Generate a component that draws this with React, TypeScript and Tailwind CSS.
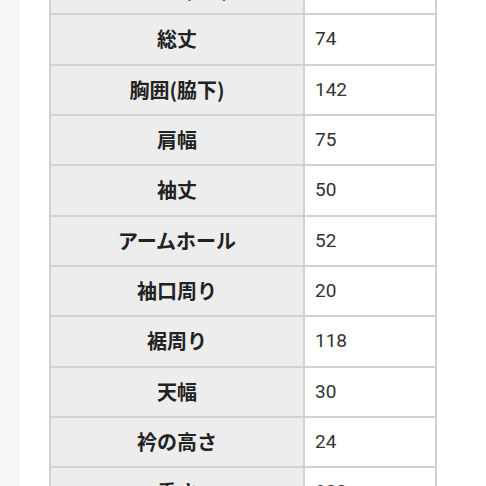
import React from 'react';

const ROWS: [string, string][] = [
  ['サイズ(cm)', ''],
  ['総丈', '74'],
  ['胸囲(脇下)', '142'],
  ['肩幅', '75'],
  ['袖丈', '50'],
  ['アームホール', '52'],
  ['袖口周り', '20'],
  ['裾周り', '118'],
  ['天幅', '30'],
  ['衿の高さ', '24'],
  ['重さ', '820'],
];

export default function App() {
  return (
    <div className="w-[486px] h-[486px] overflow-hidden bg-white flex">
      <div className="w-[20px] h-full bg-[#f6f6f6]" />
      <div className="flex-1 pl-[29px]">
        <div className="mt-[-37px] w-[388px] grid grid-cols-[252px_130px] gap-[2px] p-[2px] bg-[#d2d2d2]">
          {ROWS.map(([label, value]) => (
            <React.Fragment key={label}>
              <div className="h-[48.33px] bg-[#ededed] flex items-center justify-center font-bold text-[20px] text-[#222] font-['Noto_Sans_CJK_JP',sans-serif]">
                {label}
              </div>
              <div className="h-[48.33px] bg-white flex items-center pl-[10px] text-[19px] text-[#333] font-['Roboto','Noto_Sans_CJK_JP',sans-serif]">
                {value}
              </div>
            </React.Fragment>
          ))}
        </div>
      </div>
    </div>
  );
}
